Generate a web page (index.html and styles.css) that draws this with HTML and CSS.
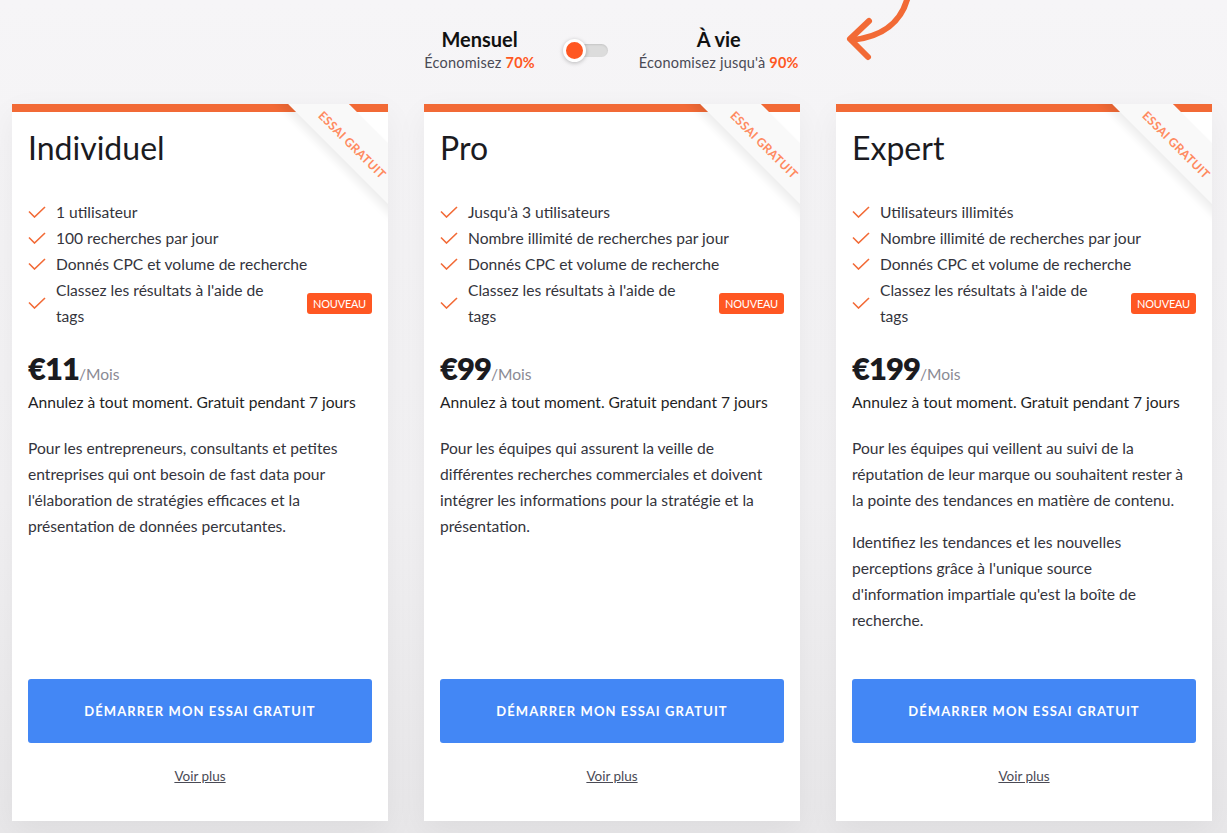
FILE: index.html
```html
<!DOCTYPE html>
<html lang="fr">
<head>
  <meta charset="UTF-8">
  <meta name="viewport" content="width=device-width, initial-scale=1.0">
  <title>Tarifs</title>
  <link rel="stylesheet" href="styles.css">
</head>
<body>
  <div class="page">
    <div class="switcher">
      <div class="period">
        <div class="period-name">Mensuel</div>
        <div class="period-save">Économisez <b>70%</b></div>
      </div>
      <div class="toggle"><span class="knob"></span></div>
      <div class="period">
        <div class="period-name">À vie</div>
        <div class="period-save">Économisez jusqu'à <b>90%</b></div>
      </div>
      <svg class="arrow" width="80" height="70" viewBox="0 0 80 70">
        <path d="M68 -4 C62 22 42 37 12 40" fill="none" stroke="#f26a36" stroke-width="6" stroke-linecap="round"/>
        <path d="M29 21 L10 39 L28 57" fill="none" stroke="#f26a36" stroke-width="6" stroke-linecap="round" stroke-linejoin="round"/>
      </svg>
    </div>

    <div class="plans">
      <div class="card">
        <div class="ribbon">ESSAI GRATUIT</div>
        <h2 class="plan-name">Individuel</h2>
        <ul class="features">
          <li><svg class="check" width="18" height="12" viewBox="0 0 18 12"><path d="M1 5.5 L6.5 11 L17 1"/></svg><span class="feat-text">1 utilisateur</span></li>
          <li><svg class="check" width="18" height="12" viewBox="0 0 18 12"><path d="M1 5.5 L6.5 11 L17 1"/></svg><span class="feat-text">100 recherches par jour</span></li>
          <li><svg class="check" width="18" height="12" viewBox="0 0 18 12"><path d="M1 5.5 L6.5 11 L17 1"/></svg><span class="feat-text">Donnés CPC et volume de recherche</span></li>
          <li><svg class="check" width="18" height="12" viewBox="0 0 18 12"><path d="M1 5.5 L6.5 11 L17 1"/></svg><span class="feat-text narrow">Classez les résultats à l'aide de tags</span><span class="badge">NOUVEAU</span></li>
        </ul>
        <div class="price"><strong>€11</strong><span>/Mois</span></div>
        <p class="cancel">Annulez à tout moment. Gratuit pendant 7 jours</p>
        <div class="desc">
          <p>Pour les entrepreneurs, consultants et petites entreprises qui ont besoin de fast data pour l'élaboration de stratégies efficaces et la présentation de données percutantes.</p>
        </div>
        <a href="#" class="cta">DÉMARRER MON ESSAI GRATUIT</a>
        <a href="#" class="more">Voir plus</a>
      </div>

      <div class="card">
        <div class="ribbon">ESSAI GRATUIT</div>
        <h2 class="plan-name">Pro</h2>
        <ul class="features">
          <li><svg class="check" width="18" height="12" viewBox="0 0 18 12"><path d="M1 5.5 L6.5 11 L17 1"/></svg><span class="feat-text">Jusqu'à 3 utilisateurs</span></li>
          <li><svg class="check" width="18" height="12" viewBox="0 0 18 12"><path d="M1 5.5 L6.5 11 L17 1"/></svg><span class="feat-text">Nombre illimité de recherches par jour</span></li>
          <li><svg class="check" width="18" height="12" viewBox="0 0 18 12"><path d="M1 5.5 L6.5 11 L17 1"/></svg><span class="feat-text">Donnés CPC et volume de recherche</span></li>
          <li><svg class="check" width="18" height="12" viewBox="0 0 18 12"><path d="M1 5.5 L6.5 11 L17 1"/></svg><span class="feat-text narrow">Classez les résultats à l'aide de tags</span><span class="badge">NOUVEAU</span></li>
        </ul>
        <div class="price"><strong>€99</strong><span>/Mois</span></div>
        <p class="cancel">Annulez à tout moment. Gratuit pendant 7 jours</p>
        <div class="desc">
          <p>Pour les équipes qui assurent la veille de différentes recherches commerciales et doivent intégrer les informations pour la stratégie et la présentation.</p>
        </div>
        <a href="#" class="cta">DÉMARRER MON ESSAI GRATUIT</a>
        <a href="#" class="more">Voir plus</a>
      </div>

      <div class="card">
        <div class="ribbon">ESSAI GRATUIT</div>
        <h2 class="plan-name">Expert</h2>
        <ul class="features">
          <li><svg class="check" width="18" height="12" viewBox="0 0 18 12"><path d="M1 5.5 L6.5 11 L17 1"/></svg><span class="feat-text">Utilisateurs illimités</span></li>
          <li><svg class="check" width="18" height="12" viewBox="0 0 18 12"><path d="M1 5.5 L6.5 11 L17 1"/></svg><span class="feat-text">Nombre illimité de recherches par jour</span></li>
          <li><svg class="check" width="18" height="12" viewBox="0 0 18 12"><path d="M1 5.5 L6.5 11 L17 1"/></svg><span class="feat-text">Donnés CPC et volume de recherche</span></li>
          <li><svg class="check" width="18" height="12" viewBox="0 0 18 12"><path d="M1 5.5 L6.5 11 L17 1"/></svg><span class="feat-text narrow">Classez les résultats à l'aide de tags</span><span class="badge">NOUVEAU</span></li>
        </ul>
        <div class="price"><strong>€199</strong><span>/Mois</span></div>
        <p class="cancel">Annulez à tout moment. Gratuit pendant 7 jours</p>
        <div class="desc">
          <p>Pour les équipes qui veillent au suivi de la réputation de leur marque ou souhaitent rester à la pointe des tendances en matière de contenu.</p>
          <p class="tight">Identifiez les tendances et les nouvelles perceptions grâce à l'unique source d'information impartiale qu'est la boîte de recherche.</p>
        </div>
        <a href="#" class="cta">DÉMARRER MON ESSAI GRATUIT</a>
        <a href="#" class="more">Voir plus</a>
      </div>
    </div>
  </div>
</body>
</html>
```

FILE: styles.css
```css
html {
  overflow: hidden;
}

body {
  margin: 0;
  font-family: "Lato", "Open Sans", sans-serif;
  color: #2b2b2b;
  background: linear-gradient(to bottom, #f6f5f7 0%, #f2f1f3 60%, #e8e7e9 100%);
  min-height: 833px;
}

.page {
  width: 1227px;
}

/* billing switcher */
.switcher {
  position: relative;
  display: flex;
  justify-content: center;
  align-items: center;
  height: 104px;
  box-sizing: border-box;
  padding: 0 4px 4px 0;
}

.period {
  text-align: center;
}

.period-name {
  font-size: 20px;
  font-weight: 700;
  color: #111;
  line-height: 24px;
}

.period-save {
  font-size: 14.5px;
  letter-spacing: 0.2px;
  line-height: 20px;
  color: #4a4a55;
  margin-top: 2px;
}

.period-save b {
  color: #ff5722;
  font-weight: 700;
}

.toggle {
  position: relative;
  width: 37px;
  height: 13px;
  border-radius: 7px;
  background: #dcdcdc;
  margin: 0 31px 0 36px;
  box-shadow: inset 0 1px 2px rgba(0,0,0,0.1);
}

.knob {
  position: absolute;
  left: -8px;
  top: -5px;
  width: 17px;
  height: 17px;
  border-radius: 50%;
  background: #ff5722;
  border: 3px solid #fff;
  box-shadow: 0 1px 4px rgba(0,0,0,0.25);
}

.arrow {
  position: absolute;
  left: 840px;
  top: 0;
}

/* plans */
.plans {
  display: flex;
  gap: 36px;
  padding-left: 12px;
}

.card {
  position: relative;
  overflow: hidden;
  width: 376px;
  min-height: 717px;
  box-sizing: border-box;
  background: #fff;
  padding: 24px 16px 35px;
  display: flex;
  flex-direction: column;
  box-shadow: 0 10px 30px rgba(0,0,0,0.05);
}

.card::before {
  content: "";
  position: absolute;
  top: 0;
  left: 0;
  right: 0;
  height: 8px;
  background: #f26a36;
}

.ribbon {
  position: absolute;
  z-index: 1;
  top: 13px;
  right: -65px;
  width: 200px;
  height: 43px;
  box-sizing: border-box;
  padding: 19px 0 0 8px;
  transform: rotate(45deg);
  background: #f9f9f9;
  box-shadow: 0 6px 8px rgba(0,0,0,0.07);
  color: #ff8a60;
  font-size: 12px;
  font-weight: 700;
  letter-spacing: 0.3px;
  text-align: center;
  line-height: 16px;
}

.plan-name {
  margin: 0;
  font-size: 32px;
  font-weight: 400;
  line-height: 40px;
  color: #1b1b1f;
}

.features {
  list-style: none;
  margin: 31px 0 0;
  padding: 0;
}

.features li {
  display: flex;
  align-items: center;
  font-size: 15.6px;
  line-height: 26px;
  color: #34343c;
}

.check {
  flex: none;
  margin-right: 10px;
  fill: none;
  stroke: #f26a36;
  stroke-width: 1.6;
}

.feat-text {
  flex: 1;
}

.feat-text.narrow {
  max-width: 222px;
}

.badge {
  margin-left: auto;
  background: #ff5722;
  color: #fff;
  font-size: 11px;
  line-height: 21px;
  padding: 0 6px;
  border-radius: 3px;
  letter-spacing: -0.2px;
}

.price {
  margin-top: 21px;
  line-height: 36px;
}

.price strong {
  font-size: 31px;
  font-weight: 800;
  color: #1b1b1f;
  letter-spacing: -1px;
}

.price span {
  font-size: 15.6px;
  color: #8a8a94;
}

.cancel {
  margin: -2px 0 0;
  font-size: 15.6px;
  line-height: 24px;
  color: #1f1f25;
}

.desc {
  flex: 1;
  margin-top: 21px;
}

.desc p {
  margin: 0 0 16px;
  font-size: 15.6px;
  line-height: 26px;
  color: #34343c;
}

.desc p.tight {
  max-width: 300px;
}

.cta {
  display: block;
  height: 64px;
  line-height: 64px;
  text-align: center;
  background: #4387f5;
  color: #fff;
  text-decoration: none;
  font-size: 13px;
  font-weight: 700;
  letter-spacing: 1.1px;
  border-radius: 3px;
  margin-top: 30px;
}

.more {
  align-self: center;
  margin-top: 23px;
  font-size: 13.5px;
  line-height: 20px;
  color: #4a4a55;
}
```
